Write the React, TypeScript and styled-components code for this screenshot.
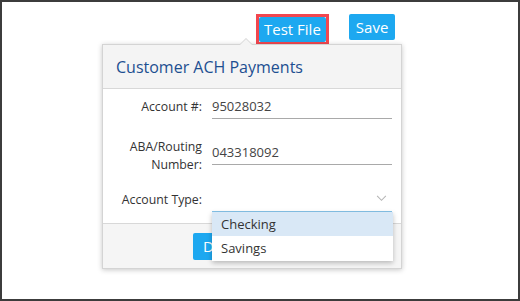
import styled, { createGlobalStyle } from 'styled-components';

const GlobalStyle = createGlobalStyle`
  html, body {
    margin: 0;
    padding: 0;
    background: #ffffff;
  }
  body {
    font-family: 'Open Sans', 'Liberation Sans', sans-serif;
  }
`;

const accountTypes = [
  { label: 'Checking', active: true },
  { label: 'Savings', active: false }
];

const App = () => {
  return (
    <Frame>
      <GlobalStyle />
      <Toolbar>
        <Highlight>
          <BlueButton $height={25} $pad={5}>
            Test File
          </BlueButton>
        </Highlight>
        <BlueButton $height={26} $pad={7}>
          Save
        </BlueButton>
      </Toolbar>

      <Popover>
        <PopoverHeader>Customer ACH Payments</PopoverHeader>
        <PopoverBody>
          <Field $top={6} $height={24}>
            <Label>Account #:</Label>
            <Input>95028032</Input>
          </Field>
          <Field $top={19} $height={36}>
            <Label>
              ABA/Routing
              <br />
              Number:
            </Label>
            <Input $offset={3}>043318092</Input>
          </Field>
          <Field $top={14} $height={24}>
            <Label>Account Type:</Label>
            <SelectBox>
              <Chevron viewBox="0 0 12 8" width="11" height="7">
                <path d="M1 1l5 5 5-5" fill="none" stroke="#b5b5b5" strokeWidth="1.2" />
              </Chevron>
              <Options>
                {accountTypes.map((item) => (
                  <Option key={item.label} $active={item.active}>
                    {item.label}
                  </Option>
                ))}
              </Options>
            </SelectBox>
          </Field>
        </PopoverBody>
        <PopoverFooter>
          <BlueButton $height={27} $pad={10}>
            Done
          </BlueButton>
        </PopoverFooter>
      </Popover>
    </Frame>
  );
};

export default App;

const Frame = styled.div`
  box-sizing: border-box;
  width: 520px;
  height: 301px;
  border: 2px solid #3c3c3c;
  padding-top: 12px;
  display: flex;
  flex-direction: column;
  overflow: hidden;
`;

const Toolbar = styled.div`
  display: flex;
  align-items: flex-start;
  gap: 20px;
  padding-left: 254px;
  height: 30px;
`;

const Highlight = styled.div`
  display: flex;
  border: 3px solid #f2474f;
`;

const BlueButton = styled.button<{ $height: number; $pad: number }>`
  box-sizing: border-box;
  height: ${(p) => p.$height}px;
  margin: 0;
  padding: 0 ${(p) => p.$pad}px;
  border: none;
  border-radius: 2px;
  background: #1da8f0;
  color: #ffffff;
  font-family: 'Open Sans', 'Liberation Sans', sans-serif;
  font-size: 15px;
  line-height: ${(p) => p.$height}px;
  cursor: pointer;
`;

const Popover = styled.div`
  position: relative;
  box-sizing: border-box;
  width: 300px;
  margin-left: 100px;
  border: 1px solid #d4d4d4;
  background: #ffffff;
  box-shadow: 0 1px 5px rgba(0, 0, 0, 0.22);

  &::before,
  &::after {
    content: '';
    position: absolute;
    left: 137px;
    width: 0;
    height: 0;
    border-left: 6px solid transparent;
    border-right: 6px solid transparent;
  }
  &::before {
    top: -7px;
    border-bottom: 6px solid #d4d4d4;
  }
  &::after {
    top: -6px;
    border-bottom: 6px solid #f4f4f4;
  }
`;

const PopoverHeader = styled.div`
  height: 43px;
  padding-left: 13px;
  display: flex;
  align-items: center;
  background: #f4f4f4;
  border-bottom: 1px solid #d8d8d8;
  color: #1d4f91;
  font-size: 16px;
`;

const PopoverBody = styled.div`
  display: flex;
  flex-direction: column;
  padding-bottom: 11px;
`;

const Field = styled.div<{ $top: number; $height: number }>`
  display: grid;
  grid-template-columns: 99px 180px;
  column-gap: 10px;
  align-items: start;
  margin-top: ${(p) => p.$top}px;
  height: ${(p) => p.$height}px;
`;

const Label = styled.div`
  text-align: right;
  color: #333333;
  font-size: 12.3px;
  line-height: 18px;
  align-self: center;
`;

const Input = styled.div<{ $offset?: number }>`
  box-sizing: border-box;
  height: 24px;
  margin-top: ${(p) => p.$offset || 0}px;
  border-bottom: 1px solid #a9a9a9;
  color: #444444;
  font-size: 13px;
  line-height: 23px;
`;

const SelectBox = styled.div`
  position: relative;
  box-sizing: border-box;
  height: 24px;
  border-bottom: 1px solid #86c4ea;
  display: flex;
  justify-content: flex-end;
  align-items: center;
  padding-right: 5px;
`;

const Chevron = styled.svg`
  display: block;
  margin-bottom: 2px;
`;

const Options = styled.ul`
  position: absolute;
  top: 24px;
  left: 0;
  width: 181px;
  margin: 0;
  padding: 0 0 1px;
  list-style: none;
  background: #ffffff;
  box-shadow: 0 2px 5px rgba(0, 0, 0, 0.25);
  z-index: 2;
`;

const Option = styled.li<{ $active: boolean }>`
  height: 24px;
  padding-left: 9px;
  line-height: 24px;
  font-size: 13px;
  color: #333333;
  background: ${(p) => (p.$active ? '#d9e8f6' : '#ffffff')};
`;

const PopoverFooter = styled.div`
  height: 45px;
  box-sizing: border-box;
  padding: 9px 0 0 90px;
  background: #f5f5f5;
  border-top: 1px solid #d8d8d8;
`;
